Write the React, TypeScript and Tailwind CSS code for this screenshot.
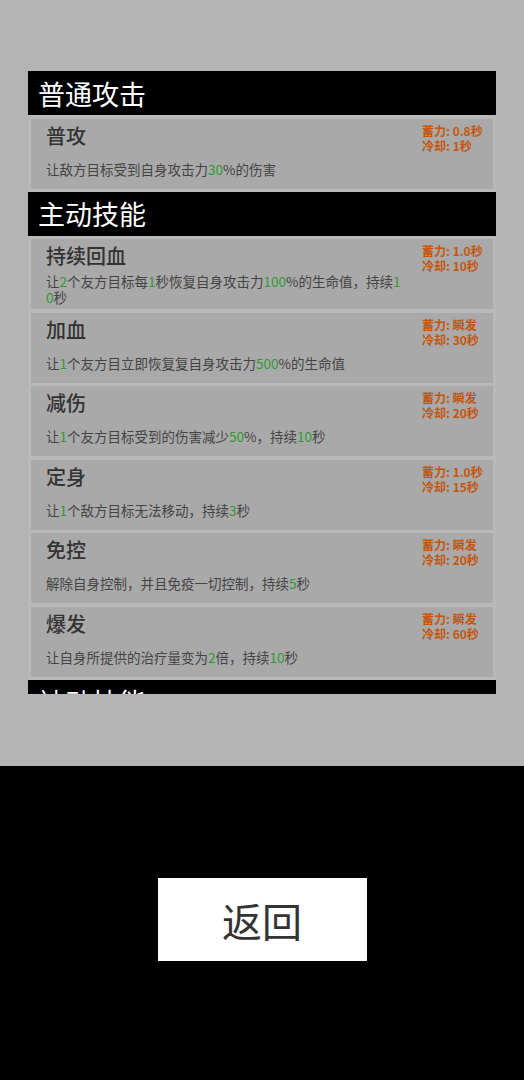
const FONT = { fontFamily: '"Noto Sans CJK SC", "Noto Sans", sans-serif' };

type Part = string | [string];

interface Skill {
    name: string;
    desc: Part[];
    charge: string;
    cooldown: string;
}

const basic: Skill[] = [
    { name: '普攻', desc: ['让敌方目标受到自身攻击力', ['30'], '%的伤害'], charge: '0.8秒', cooldown: '1秒' },
];

const active: Skill[] = [
    {
        name: '持续回血',
        desc: ['让', ['2'], '个友方目标每', ['1'], '秒恢复自身攻击力', ['100'], '%的生命值，持续', ['10'], '秒'],
        charge: '1.0秒',
        cooldown: '10秒',
    },
    { name: '加血', desc: ['让', ['1'], '个友方目立即恢复复自身攻击力', ['500'], '%的生命值'], charge: '瞬发', cooldown: '30秒' },
    { name: '减伤', desc: ['让', ['1'], '个友方目标受到的伤害减少', ['50'], '%，持续', ['10'], '秒'], charge: '瞬发', cooldown: '20秒' },
    { name: '定身', desc: ['让', ['1'], '个敌方目标无法移动，持续', ['3'], '秒'], charge: '1.0秒', cooldown: '15秒' },
    { name: '免控', desc: ['解除自身控制，并且免疫一切控制，持续', ['5'], '秒'], charge: '瞬发', cooldown: '20秒' },
    { name: '爆发', desc: ['让自身所提供的治疗量变为', ['2'], '倍，持续', ['10'], '秒'], charge: '瞬发', cooldown: '60秒' },
];

function SectionHeader({ title }: { title: string }) {
    return (
        <div className="h-[44px] bg-black flex items-center pl-[10px] shrink-0">
            <span className="text-white text-[27px] leading-none">{title}</span>
        </div>
    );
}

function SkillCard({ skill }: { skill: Skill }) {
    return (
        <div className="mx-[3px] mt-[3.5px] h-[70px] bg-[#a9a9a9] flex shrink-0">
            <div className="flex-1 flex flex-col pl-[15px]">
                <div className="pt-[5px] h-[30px] text-[20px] leading-[24px] font-medium text-[#333333]">{skill.name}</div>
                <div className="flex-1 flex items-center">
                    <p className="w-[356px] text-[13.5px] leading-[16px] text-[#444444] break-all">
                        {skill.desc.map((p, i) =>
                            typeof p === 'string' ? (
                                <span key={i}>{p}</span>
                            ) : (
                                <span key={i} className="text-[#2e9a2e]">{p[0]}</span>
                            )
                        )}
                    </p>
                </div>
            </div>
            <div className="w-[71px] pt-[4px] text-[12px] leading-[15px] font-bold text-[#c4560c]">
                <div>蓄力: {skill.charge}</div>
                <div>冷却: {skill.cooldown}</div>
            </div>
        </div>
    );
}

export default function App() {
    return (
        <div className="w-[524px] h-[1080px] flex flex-col bg-black" style={FONT}>
            <div className="h-[766px] bg-[#b4b4b4] pt-[71px] px-[28px]">
                <div className="h-[623px] overflow-hidden bg-[#b9b9b9] flex flex-col">
                    <SectionHeader title="普通攻击" />
                    {basic.map((s) => (
                        <SkillCard key={s.name} skill={s} />
                    ))}
                    <div className="h-[3px] shrink-0" />
                    <SectionHeader title="主动技能" />
                    {active.map((s) => (
                        <SkillCard key={s.name} skill={s} />
                    ))}
                    <div className="h-[3px] shrink-0" />
                    <SectionHeader title="被动技能" />
                </div>
            </div>
            <div className="flex-1 flex justify-center pt-[112px]">
                <button className="w-[209px] h-[83px] bg-white flex items-center justify-center">
                    <span className="text-[40px] text-[#333333] leading-none">返回</span>
                </button>
            </div>
        </div>
    );
}
